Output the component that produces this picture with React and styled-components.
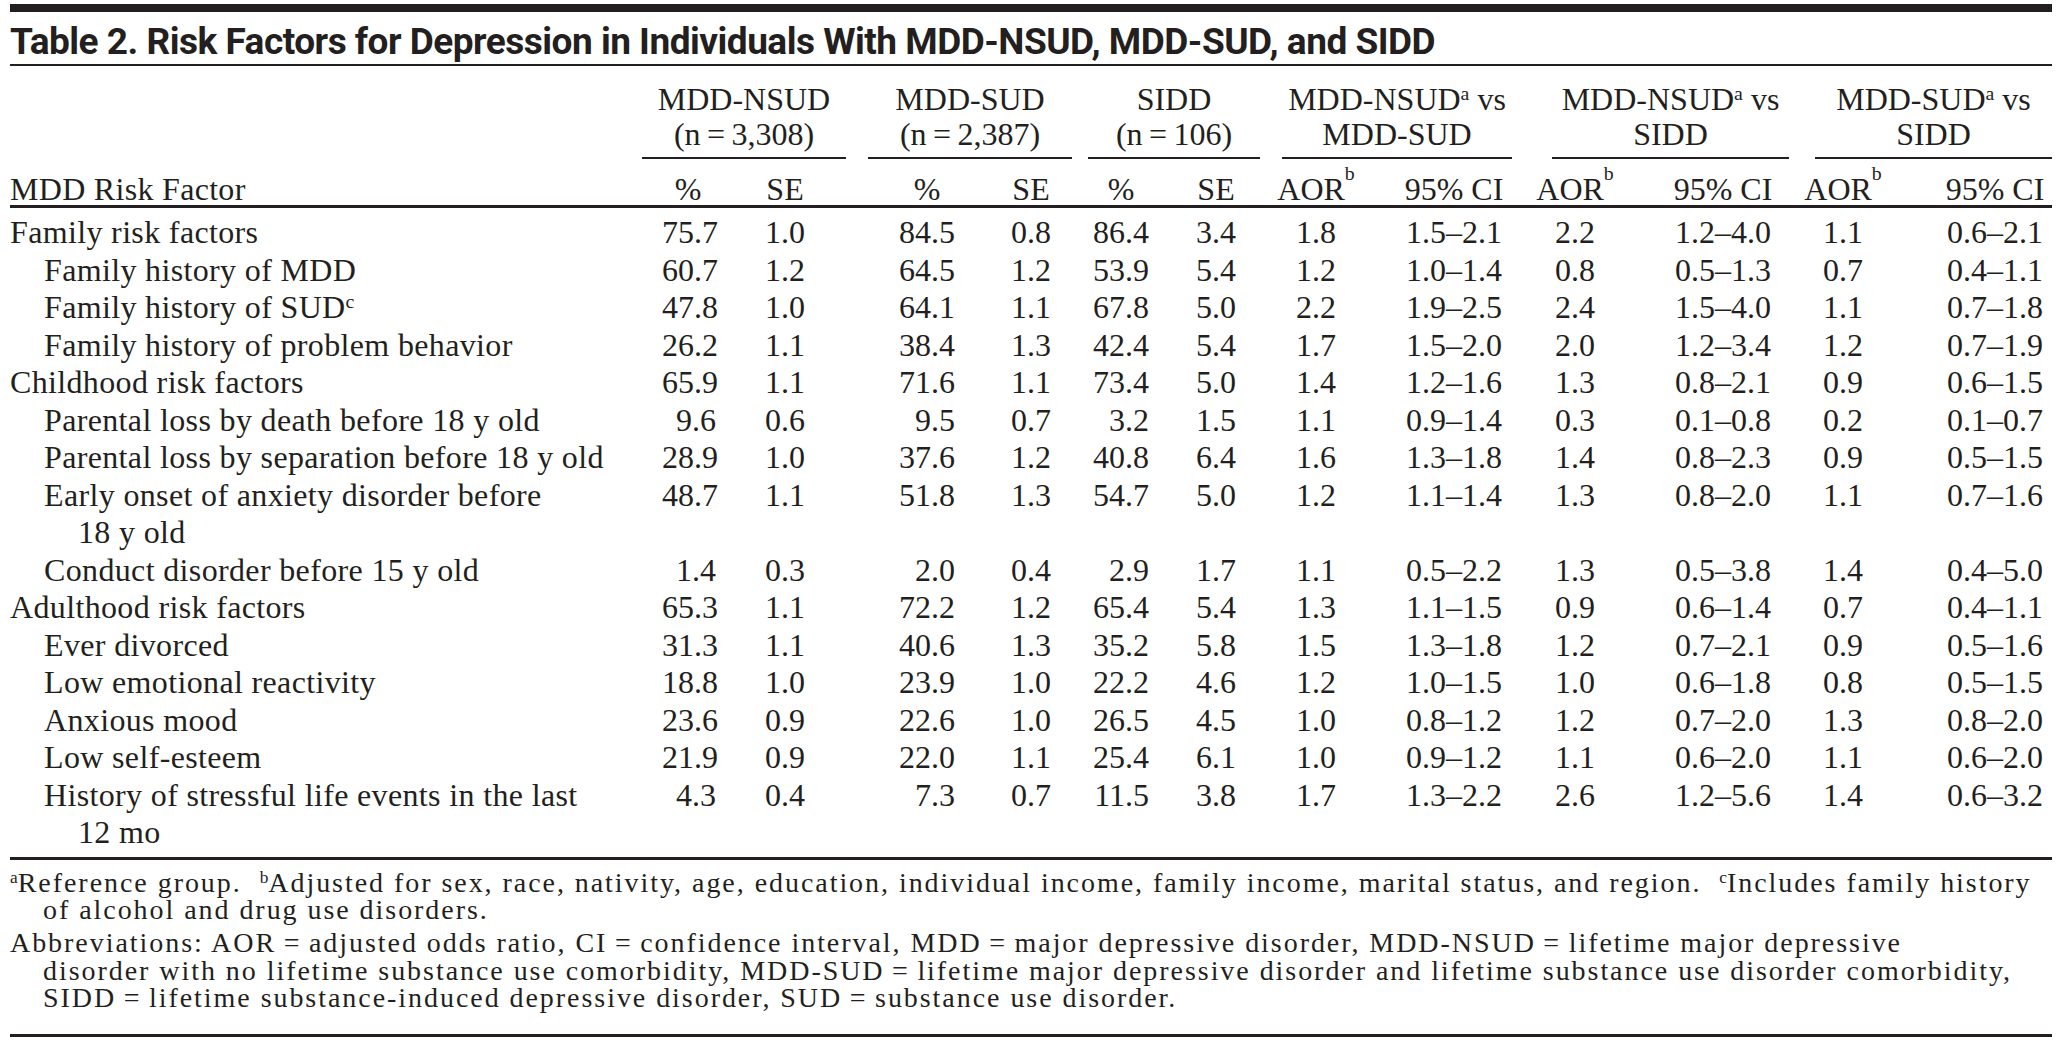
import React from "react";
import styled, { createGlobalStyle } from "styled-components";

const INK = "#231f20";

const Global = createGlobalStyle`
  html, body { margin: 0; padding: 0; background: #ffffff; }
  body {
    color: ${INK};
    font-family: "Liberation Serif", "Times New Roman", serif;
  }
`;

const Page = styled.div`
  width: 2042px;
  margin-left: 10px;
  padding-top: 4px;
`;

const TopBar = styled.div`
  height: 8px;
  background: ${INK};
`;

const Title = styled.h1`
  margin: 12px 0 0;
  padding-bottom: 4px;
  border-bottom: 2px solid ${INK};
  font-family: Roboto, "Liberation Sans", sans-serif;
  font-weight: 700;
  font-size: 37px;
  line-height: 36px;
  letter-spacing: -0.5px;
  white-space: nowrap;
`;

const COLS =
  "652px 54px 89px 150px 96px 98px 87px 100px 166px 93px 176px 92px 180px";

const Header = styled.div`
  display: grid;
  grid-template-columns: ${COLS};
  padding-top: 15.5px;
  border-bottom: 3px solid ${INK};
  font-size: 32px;
`;

const Group = styled.div`
  grid-row: 1;
  grid-column: ${(p) => p.$col} / span 2;
  margin-left: ${(p) => p.$ml}px;
  margin-right: ${(p) => p.$mr}px;
  padding-bottom: 5.5px;
  border-bottom: 2px solid ${INK};
  text-align: center;
  line-height: 35px;
  white-space: nowrap;
`;

const StubHead = styled.div`
  grid-row: 2;
  grid-column: 1;
  margin-top: 14px;
  line-height: 32px;
  letter-spacing: 0.3px;
`;

const ColHead = styled.div`
  grid-row: 2;
  margin-top: 14px;
  justify-self: end;
  width: ${(p) => p.$w}px;
  display: flex;
  justify-content: center;
  line-height: 32px;
  white-space: nowrap;
`;

const Body = styled.div`
  display: grid;
  grid-template-columns: ${COLS};
  padding: 6px 0 5px;
  border-bottom: 3px solid ${INK};
  font-size: 32px;
  line-height: 37.5px;
`;

const Label = styled.div`
  grid-column: 1;
  padding-left: ${(p) => (p.$sub ? 68 : 34)}px;
  text-indent: -34px;
  letter-spacing: 0.35px;
  white-space: nowrap;
`;

const Value = styled.div`
  text-align: right;
  white-space: nowrap;
`;

const Sup = styled.sup`
  font-size: 0.62em;
  line-height: 0;
  vertical-align: 0.5em;
  letter-spacing: 0;
`;

const Notes = styled.div`
  padding: 9px 0 22px;
  border-bottom: 3px solid ${INK};
  font-size: 28px;
  line-height: 27.5px;
  letter-spacing: 1.95px;
`;

const Note = styled.p`
  margin: ${(p) => (p.$first ? 0 : 5.5)}px 0 0;
  padding-left: 33px;
  text-indent: -33px;
  white-space: nowrap;
`;

const T = "\u2009=\u2009";

const groups = [
  { l1: "MDD-NSUD", l2: `(n${T}3,308)`, ml: -20, mr: -41 },
  { l1: "MDD-SUD", l2: `(n${T}2,387)`, ml: 63, mr: -21 },
  { l1: "SIDD", l2: `(n${T}106)`, ml: 37, mr: -24 },
  { l1: <>MDD-NSUD<Sup>a</Sup> vs</>, l2: "MDD-SUD", ml: 46, mr: -10 },
  { l1: <>MDD-NSUD<Sup>a</Sup> vs</>, l2: "SIDD", ml: 50, mr: -18 },
  { l1: <>MDD-SUD<Sup>a</Sup> vs</>, l2: "SIDD", ml: 44, mr: -9 },
];

const AOR = (
  <>
    AOR<Sup>b</Sup>
  </>
);

const heads = [
  { t: "%", w: 56 },
  { t: "SE", w: 40 },
  { t: "%", w: 56 },
  { t: "SE", w: 40 },
  { t: "%", w: 56 },
  { t: "SE", w: 40 },
  { t: AOR, w: 40 },
  { t: "95% CI", w: 96 },
  { t: AOR, w: 40 },
  { t: "95% CI", w: 96 },
  { t: AOR, w: 40 },
  { t: "95% CI", w: 96 },
];

const rows = [
  { lines: ["Family risk factors"], v: "75.7 1.0 84.5 0.8 86.4 3.4 1.8 1.5–2.1 2.2 1.2–4.0 1.1 0.6–2.1" },
  { sub: true, lines: ["Family history of MDD"], v: "60.7 1.2 64.5 1.2 53.9 5.4 1.2 1.0–1.4 0.8 0.5–1.3 0.7 0.4–1.1" },
  { sub: true, lines: [<>Family history of SUD<Sup>c</Sup></>], v: "47.8 1.0 64.1 1.1 67.8 5.0 2.2 1.9–2.5 2.4 1.5–4.0 1.1 0.7–1.8" },
  { sub: true, lines: ["Family history of problem behavior"], v: "26.2 1.1 38.4 1.3 42.4 5.4 1.7 1.5–2.0 2.0 1.2–3.4 1.2 0.7–1.9" },
  { lines: ["Childhood risk factors"], v: "65.9 1.1 71.6 1.1 73.4 5.0 1.4 1.2–1.6 1.3 0.8–2.1 0.9 0.6–1.5" },
  { sub: true, lines: ["Parental loss by death before 18 y old"], v: "9.6 0.6 9.5 0.7 3.2 1.5 1.1 0.9–1.4 0.3 0.1–0.8 0.2 0.1–0.7" },
  { sub: true, lines: ["Parental loss by separation before 18 y old"], v: "28.9 1.0 37.6 1.2 40.8 6.4 1.6 1.3–1.8 1.4 0.8–2.3 0.9 0.5–1.5" },
  { sub: true, lines: ["Early onset of anxiety disorder before", "18 y old"], v: "48.7 1.1 51.8 1.3 54.7 5.0 1.2 1.1–1.4 1.3 0.8–2.0 1.1 0.7–1.6" },
  { sub: true, lines: ["Conduct disorder before 15 y old"], v: "1.4 0.3 2.0 0.4 2.9 1.7 1.1 0.5–2.2 1.3 0.5–3.8 1.4 0.4–5.0" },
  { lines: ["Adulthood risk factors"], v: "65.3 1.1 72.2 1.2 65.4 5.4 1.3 1.1–1.5 0.9 0.6–1.4 0.7 0.4–1.1" },
  { sub: true, lines: ["Ever divorced"], v: "31.3 1.1 40.6 1.3 35.2 5.8 1.5 1.3–1.8 1.2 0.7–2.1 0.9 0.5–1.6" },
  { sub: true, lines: ["Low emotional reactivity"], v: "18.8 1.0 23.9 1.0 22.2 4.6 1.2 1.0–1.5 1.0 0.6–1.8 0.8 0.5–1.5" },
  { sub: true, lines: ["Anxious mood"], v: "23.6 0.9 22.6 1.0 26.5 4.5 1.0 0.8–1.2 1.2 0.7–2.0 1.3 0.8–2.0" },
  { sub: true, lines: ["Low self-esteem"], v: "21.9 0.9 22.0 1.1 25.4 6.1 1.0 0.9–1.2 1.1 0.6–2.0 1.1 0.6–2.0" },
  { sub: true, lines: ["History of stressful life events in the last", "12 mo"], v: "4.3 0.4 7.3 0.7 11.5 3.8 1.7 1.3–2.2 2.6 1.2–5.6 1.4 0.6–3.2" },
];

export default function App() {
  return (
    <>
      <Global />
      <Page>
        <TopBar />
        <Title>
          Table 2. Risk Factors for Depression in Individuals With MDD-NSUD, MDD-SUD, and SIDD
        </Title>

        <Header>
          {groups.map((g, i) => (
            <Group key={i} $col={2 + i * 2} $ml={g.ml} $mr={g.mr}>
              {g.l1}
              <br />
              {g.l2}
            </Group>
          ))}
          <StubHead>MDD Risk Factor</StubHead>
          {heads.map((h, i) => (
            <ColHead key={i} $w={h.w}>
              {h.t}
            </ColHead>
          ))}
        </Header>

        <Body>
          {rows.map((r, i) => (
            <React.Fragment key={i}>
              <Label $sub={r.sub}>
                {r.lines.map((l, j) => (
                  <React.Fragment key={j}>
                    {j > 0 && <br />}
                    {l}
                  </React.Fragment>
                ))}
              </Label>
              {r.v.split(" ").map((v, j) => (
                <Value key={j}>{v}</Value>
              ))}
            </React.Fragment>
          ))}
        </Body>

        <Notes>
          <Note $first>
            <Sup>a</Sup>Reference group.{"\u00a0 "}<Sup>b</Sup>Adjusted for sex, race, nativity, age,
            education, individual income, family income, marital status, and region.{"\u00a0 "}
            <Sup>c</Sup>Includes family history
            <br />
            of alcohol and drug use disorders.
          </Note>
          <Note>
            Abbreviations: AOR{T}adjusted odds ratio, CI{T}confidence interval, MDD{T}major
            depressive disorder, MDD-NSUD{T}lifetime major depressive
            <br />
            disorder with no lifetime substance use comorbidity, MDD-SUD{T}lifetime major depressive
            disorder and lifetime substance use disorder comorbidity,
            <br />
            SIDD{T}lifetime substance-induced depressive disorder, SUD{T}substance use disorder.
          </Note>
        </Notes>
      </Page>
    </>
  );
}
